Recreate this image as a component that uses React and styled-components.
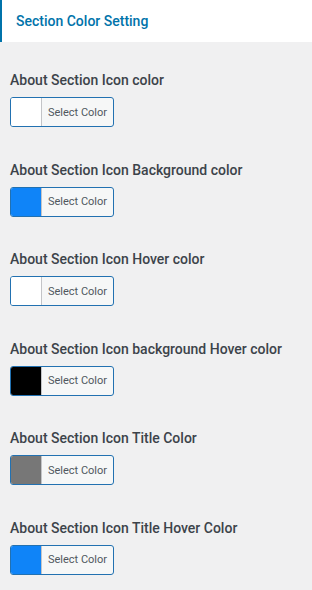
import React from 'react';
import styled, { createGlobalStyle } from 'styled-components';

const GlobalStyle = createGlobalStyle`
  html, body {
    margin: 0;
    padding: 0;
    background: #f0f0f1;
    font-family: Roboto, "Liberation Sans", Arial, sans-serif;
  }
`;

const Panel = styled.div`
  width: 312px;
  min-height: 590px;
  background: #f0f0f1;
`;

const Header = styled.div`
  height: 42px;
  box-sizing: border-box;
  background: #fff;
  border-left: 2px solid #0073aa;
  padding-left: 14px;
  display: flex;
  align-items: center;
  color: #0073aa;
  font-size: 14px;
  font-weight: 500;
`;

const Content = styled.div`
  padding: 28px 10px 0;
`;

const Field = styled.div`
  margin-bottom: 32.6px;
`;

const Label = styled.div`
  font-size: 14px;
  font-weight: 500;
  line-height: 20px;
  color: #3c434a;
  margin-bottom: 7px;
`;

const ColorButton = styled.button`
  display: flex;
  width: 104px;
  height: 30px;
  padding: 0;
  box-sizing: border-box;
  border: 1px solid #2271b1;
  border-radius: 3px;
  background: #f6f7f7;
  overflow: hidden;
  cursor: pointer;
  font-family: inherit;
`;

const Swatch = styled.span`
  width: 30px;
  flex: none;
  background: ${p => p.$color};
  border-right: 1px solid #c3c4c7;
`;

const ButtonText = styled.span`
  flex: 1;
  display: flex;
  align-items: center;
  justify-content: center;
  font-size: 11px;
  color: #50575e;
`;

const fields = [
  { label: 'About Section Icon color', color: '#ffffff' },
  { label: 'About Section Icon Background color', color: '#0f84f8' },
  { label: 'About Section Icon Hover color', color: '#ffffff' },
  { label: 'About Section Icon background Hover color', color: '#000000' },
  { label: 'About Section Icon Title Color', color: '#777777' },
  { label: 'About Section Icon Title Hover Color', color: '#0f84f8' },
];

export default function App() {
  return (
    <Panel>
      <GlobalStyle />
      <Header>Section Color Setting</Header>
      <Content>
        {fields.map(f => (
          <Field key={f.label}>
            <Label>{f.label}</Label>
            <ColorButton type="button">
              <Swatch $color={f.color} />
              <ButtonText>Select Color</ButtonText>
            </ColorButton>
          </Field>
        ))}
      </Content>
    </Panel>
  );
}
